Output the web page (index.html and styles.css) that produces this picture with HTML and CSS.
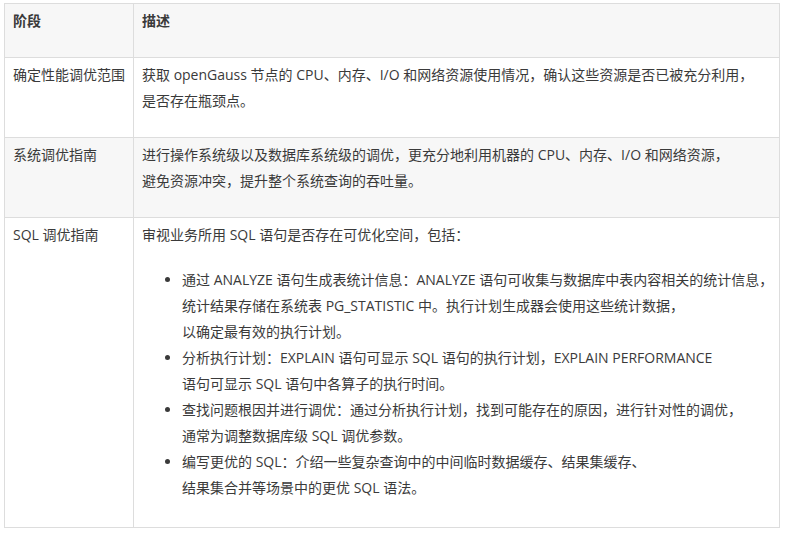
FILE: index.html
```html
<!DOCTYPE html>
<html lang="zh-CN">
<head>
<meta charset="utf-8">
<title>openGauss 性能调优</title>
<link rel="stylesheet" href="styles.css">
</head>
<body>
<table class="doc-table">
  <colgroup><col class="col-stage"><col class="col-desc"></colgroup>
  <thead>
    <tr class="row-head"><th>阶段</th><th>描述</th></tr>
  </thead>
  <tbody>
    <tr>
      <td>确定性能调优范围</td>
      <td class="desc">获取 openGauss 节点的 CPU、内存、I/O 和网络资源使用情况，确认这些资源是否已被充分利用，<br>是否存在瓶颈点。</td>
    </tr>
    <tr class="row-alt">
      <td>系统调优指南</td>
      <td class="desc">进行操作系统级以及数据库系统级的调优，更充分地利用机器的 CPU、内存、I/O 和网络资源，<br>避免资源冲突，提升整个系统查询的吞吐量。</td>
    </tr>
    <tr>
      <td>SQL 调优指南</td>
      <td class="desc">
        <p class="lead">审视业务所用 SQL 语句是否存在可优化空间，包括：</p>
        <ul class="items">
          <li>通过 ANALYZE 语句生成表统计信息：ANALYZE 语句可收集与数据库中表内容相关的统计信息，<br>统计结果存储在系统表 PG_STATISTIC 中。执行计划生成器会使用这些统计数据，<br>以确定最有效的执行计划。</li>
          <li>分析执行计划：EXPLAIN 语句可显示 SQL 语句的执行计划，EXPLAIN PERFORMANCE<br>语句可显示 SQL 语句中各算子的执行时间。</li>
          <li>查找问题根因并进行调优：通过分析执行计划，找到可能存在的原因，进行针对性的调优，<br>通常为调整数据库级 SQL 调优参数。</li>
          <li>编写更优的 SQL：介绍一些复杂查询中的中间临时数据缓存、结果集缓存、<br>结果集合并等场景中的更优 SQL 语法。</li>
        </ul>
      </td>
    </tr>
  </tbody>
</table>
</body>
</html>
```
FILE: styles.css
```css
html, body {
  margin: 0;
  padding: 0;
  background: #ffffff;
}
body {
  padding: 3px 4px;
  font-family: "Open Sans", "Noto Sans CJK SC", sans-serif;
  font-size: 14px;
  line-height: 25.9px;
  color: #3a3a3a;
}
.doc-table {
  width: 776px;
  border-collapse: collapse;
  table-layout: fixed;
}
.col-stage { width: 129px; }
.doc-table th,
.doc-table td {
  border: 1px solid #dddddd;
  padding: 4px 8px 23px;
  text-align: left;
  vertical-align: top;
  font-weight: normal;
}
.doc-table th {
  font-weight: bold;
}
.desc {
  white-space: nowrap;
}
.row-head,
.row-alt {
  background: #f7f7f7;
}
.lead {
  margin: 0 0 20px;
}
.items {
  margin: 0 0 3px;
  padding-left: 40px;
}
```
